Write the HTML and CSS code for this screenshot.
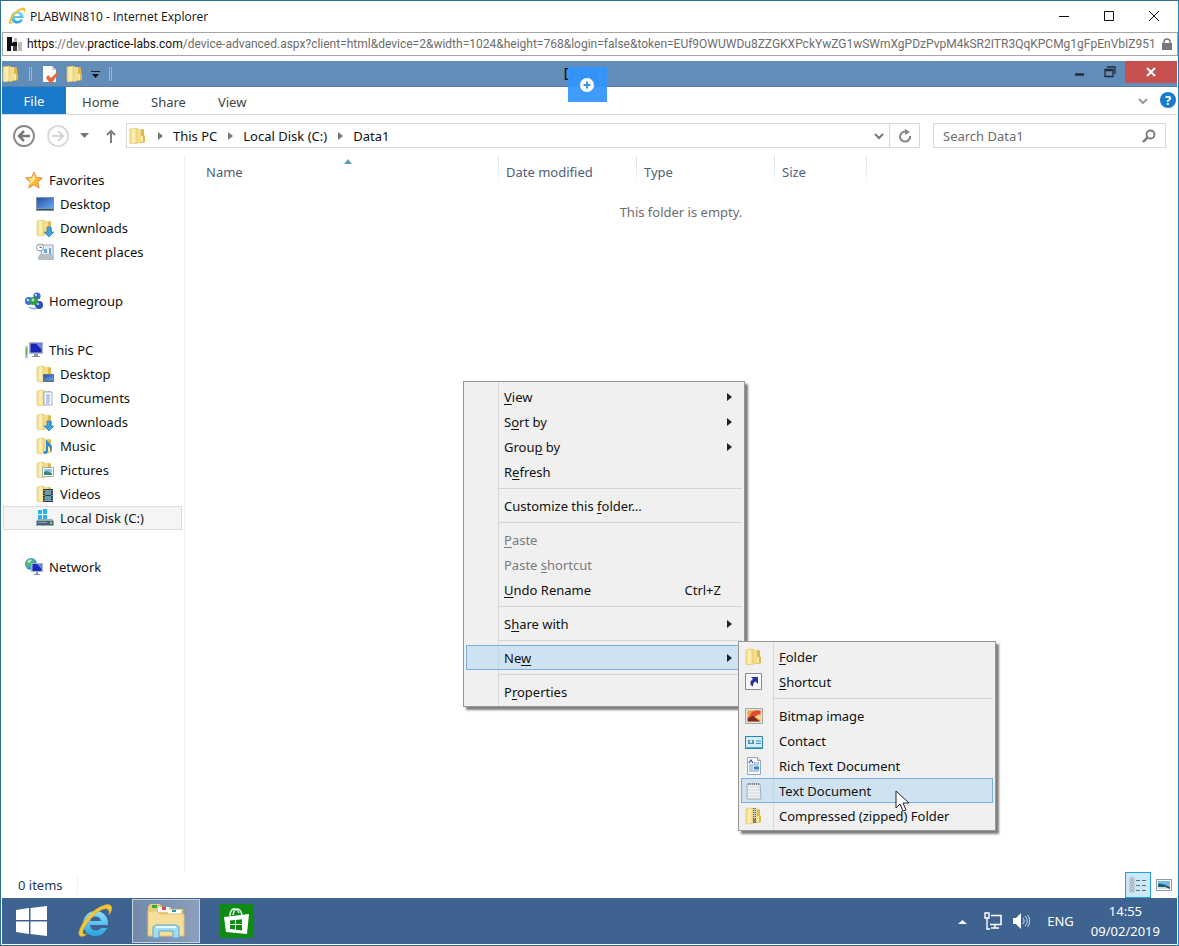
FILE: index.html
```
<!DOCTYPE html>
<html lang="en">
<head>
  <meta charset="UTF-8" />
  <meta name="viewport" content="width=device-width, initial-scale=1" />
  <title>PLABWIN810 - Internet Explorer</title>
  <link rel="stylesheet" href="styles.css">
</head>
<body>
  <!-- Shared icons -->
  <svg class="sprite" aria-hidden="true">
    <defs>
      <linearGradient id="gold" x1="0" x2="1"><stop offset="0" stop-color="#f3dc86" /><stop offset=".5" stop-color="#fdf3bd" /><stop offset="1" stop-color="#e3bf55" /></linearGradient>
      <linearGradient id="screen" x1="0" y1="0" x2="1" y2="1"><stop offset="0" stop-color="#2450a8" /><stop offset="1" stop-color="#6aa5ee" /></linearGradient>
      <linearGradient id="ieblue" x1="0" y1="0" x2="0" y2="1"><stop offset="0" stop-color="#8be0fb" /><stop offset="1" stop-color="#2aa3e0" /></linearGradient>
    </defs>
    <symbol id="folder" viewBox="0 0 18 18">
      <path d="M1 2l6-1 2 1v14l-7 1-1-1z" fill="url(#gold)" stroke="#dfbf5e" stroke-width=".6" />
      <path d="M9 3l5-1 1 1v5l1 1v6l-3 1H9z" fill="#dfb850" />
      <path d="M8 2h4v13l-4 2z" fill="#f4dd86" />
      <path d="M12 9h2v6h-2z" fill="#f9eaa9" />
    </symbol>
    <symbol id="ie" viewBox="0 0 36 36">
      <path d="M31 22H13c.3 3.500 2.500 5.500 6 5.500 2.500 0 4-1 5-2.500h6c-2 5-6 8-11.500 8C11 33 6 28 6 21S11 8 18.500 8 32 14 31 22zM13 18h11c-.4-3-2.400-4.500-5.500-4.500S13.500 15 13 18z" fill="url(#ieblue)" />
      <path d="M10 31c-4 4-9 3-8-2C4 20 16 5 28 2c7-2 9 3 4 10 1-5-1-7-5-6C19 8 8 21 6 28c-.6 2.500.6 4 4 3z" fill="#f4c63a" stroke="#d9a520" stroke-width=".5" />
    </symbol>
    <symbol id="star" viewBox="0 0 18 18">
      <path d="M9 1l2.300 5.400 6 .6-4.500 4 1.400 6L9 13.800 3.800 17l1.400-6L.7 7l6-.6z" fill="#fbb936" stroke="#e2762a" stroke-width=".8" />
      <path d="M9 3l1.600 4.500L7 12l-3 2 1.400-4L3 7.800l4-.6z" fill="#ffe58a" />
    </symbol>
    <symbol id="desktop" viewBox="0 0 18 18">
      <path d="M0 2h18v14H0z" fill="#8496ae" /><path d="M1 3h16v10H1z" fill="url(#screen)" /><path d="M1 14h16v1H1z" fill="#31486c" />
    </symbol>
    <symbol id="downloads" viewBox="0 0 18 18">
      <use href="#folder" />
      <path d="M11 8h4v5h3l-5 5-5-5h3z" fill="#3fa2de" stroke="#1d6fae" stroke-width=".6" />
    </symbol>
    <symbol id="recent" viewBox="0 0 18 18">
      <path d="M4 2h13v12H6z" fill="#e6eef5" stroke="#97a5b2" />
      <path d="M2 14l2-3h12l2 3v3H2z" fill="#b7bec4" />
      <path d="M8 6h3v4H8zM13 5h2v6h-2z" fill="#6aa6dc" />
      <circle cx="4" cy="4.500" r="3.500" fill="#fff" stroke="#8695a4" /><path d="M4 2.500v2h2" fill="none" stroke="#51606f" stroke-width=".8" />
    </symbol>
    <symbol id="homegroup" viewBox="0 0 18 18">
      <circle cx="12" cy="4" r="3.600" fill="#3a66cf" /><circle cx="4" cy="9" r="4" fill="#3b73d6" /><circle cx="14" cy="13" r="4" fill="#2c4fb8" />
      <circle cx="9" cy="9" r="4" fill="#2f9e44" /><circle cx="8" cy="8" r="1.500" fill="#a6e3a9" /><circle cx="3" cy="8" r="1.300" fill="#bfe0ff" /><circle cx="11" cy="3" r="1.200" fill="#bcd7ff" /><circle cx="13" cy="12" r="1.200" fill="#a9c3f6" />
      <path d="M4 15c3 2 6 2 8 1" fill="none" stroke="#7fa8e4" stroke-width="1.500" />
    </symbol>
    <symbol id="pc" viewBox="0 0 18 18">
      <path d="M4 1h14v12H4z" fill="#aab9c9" /><path d="M5.500 2.500h11v9h-11z" fill="#1a25b4" /><path d="M11 2.500h5.500v6z" fill="#6c8cf0" />
      <path d="M9 13h4v2h2v1H7v-1h2z" fill="#8998a8" /><path d="M0 5h3v12H0z" fill="#bcc7bd" /><path d="M1 7h1v7H1z" fill="#63a356" />
    </symbol>
    <symbol id="f-desktop" viewBox="0 0 18 18">
      <use href="#folder" /><path d="M7 9h11v8H7z" fill="#5f7795" /><path d="M8 10h9v5H8z" fill="url(#screen)" />
    </symbol>
    <symbol id="f-documents" viewBox="0 0 18 18">
      <use href="#folder" /><path d="M8 3h8v13H8z" fill="#f7fbff" stroke="#8b9cae" stroke-width=".8" />
      <path d="M10 6h4M10 8h4M10 10h4M10 12h4M10 14h3" stroke="#6a92bf" stroke-width=".9" />
    </symbol>
    <symbol id="f-music" viewBox="0 0 18 18">
      <use href="#folder" /><path d="M11 3c1 3 5 4 5 8 0 2-1 3-2 4 1-3 0-5-2-6v5c0 2-1 3-3 3s-2-3 0-3h1V3z" fill="#2f8dcc" />
    </symbol>
    <symbol id="f-pictures" viewBox="0 0 18 18">
      <use href="#folder" /><path d="M6.500 6.500h11v9h-11z" fill="#fff" stroke="#8799a9" stroke-width=".8" /><path d="M8 8h8v3H8z" fill="#8dccf0" /><path d="M8 11l3-1 5 2v2H8z" fill="#35886f" />
    </symbol>
    <symbol id="f-videos" viewBox="0 0 18 18">
      <use href="#folder" /><path d="M7 4h10v13H7z" fill="#2c3c46" /><path d="M9 5h6v5H9zM9 11h6v5H9z" fill="#6b9ca8" /><path d="M8 5v12M16 5v12" stroke="#d8dde0" stroke-width="1" stroke-dasharray="1 1.500" />
    </symbol>
    <symbol id="disk" viewBox="0 0 18 18">
      <path d="M2 1h4v4H2zM7 0h4v5H7zM2 6h4v4H2zM7 6h4v4H7z" fill="#1fb6e8" />
      <path d="M2 10h14l2 2v5H0v-5z" fill="#9aabb5" /><path d="M1 12h16v4H1z" fill="#4c6472" /><path d="M2 13h9v1H2z" fill="#83a4af" /><path d="M14 13h2v2h-2z" fill="#6be36e" />
    </symbol>
    <symbol id="network" viewBox="0 0 18 18">
      <circle cx="6" cy="6" r="6" fill="#3e9bd0" /><path d="M2 3c3-3 6-2 7 0l-3 3-3 4c-2-2-3-4-1-7z" fill="#55ba68" /><path d="M2 4c2-3 4-3 5-2L4 5z" fill="#c5efd2" />
      <path d="M6 5h12v9H6z" fill="#a8b7c8" /><path d="M7.500 6h9v7h-9z" fill="#1b2bbb" /><path d="M12 6h4.500v5z" fill="#6b8cec" /><path d="M11 14h2v2h2v1H9v-1h2z" fill="#8090a8" />
    </symbol>
    <symbol id="shortcut" viewBox="0 0 18 18">
      <path d="M.5.500h16v16H.5z" fill="#f7f8fc" stroke="#848b99" /><path d="M6 4h7v7l-2.500-2.500C8.500 9.500 8 11 8 13.500 4 12 5 8 8 6z" fill="#28349a" />
    </symbol>
    <symbol id="bitmap" viewBox="0 0 18 18">
      <path d="M.5 1.500h17v15H.5z" fill="#e3e3e3" stroke="#a5a5a5" /><path d="M2.500 3.500h13v11h-13z" fill="#f2a33a" />
      <path d="M2.500 11c3-1 3-7 8-7.500h5V7c-4 0-5 3-7 6l-6 1.500z" fill="#df4b2c" /><path d="M3 11l5-2 7 5.500H3z" fill="#7b2b21" /><path d="M10 10c2-2 4-2 5.500-1v4z" fill="#fbe091" />
    </symbol>
    <symbol id="contact" viewBox="0 0 18 18">
      <path d="M.5 4.500h17v12H.5z" fill="#d4edfa" stroke="#2f83ab" /><path d="M1 15h16v1H1z" fill="#4eb0d2" />
      <path d="M3 8h6v4H3z" fill="#4f96bd" /><circle cx="6" cy="9.500" r="1.200" fill="#fff" /><path d="M11 9h5M11 11.500h5" stroke="#3e8db3" />
    </symbol>
    <symbol id="rtf" viewBox="0 0 18 18">
      <path d="M2.500.500h10l3 3v14h-13z" fill="#f8fbff" stroke="#99a6b4" /><path d="M12.500.500v3h3" fill="#dce4ec" stroke="#99a6b4" />
      <path d="M4 6l2-3 2 3" fill="none" stroke="#284db0" stroke-width="1.200" /><path d="M9 6h5M4 8h10M4 10h4M4 12h4M4 14h10" stroke="#7898c4" /><path d="M9 9.500h5v3H9z" fill="#2f86c6" />
    </symbol>
    <symbol id="txt" viewBox="0 0 18 18">
      <path d="M2 2h13l1 15H2z" fill="#f3f3f3" stroke="#a3a9af" /><path d="M3 5h12M3 8h12M3 11h12M3 14h12" stroke="#cdd3d8" /><path d="M3 2h12" stroke="#7d8489" stroke-width="2" stroke-dasharray="1 1" />
    </symbol>
    <symbol id="zip" viewBox="0 0 18 18">
      <use href="#folder" /><path d="M9.500 1v12" stroke="#555c63" stroke-width="3" stroke-dasharray="1 1" /><path d="M9.500 1v12" stroke="#b9bec2" stroke-width="1" /><path d="M8 12h3v4H8z" fill="#767d83" />
    </symbol>
  </svg>

  <header class="browser-bar">
    <svg class="icon" viewBox="0 0 36 36"><use href="#ie" /></svg>
    <h1>PLABWIN810 - Internet Explorer</h1>
    <div class="browser-controls">
      <button aria-label="Minimize"><svg viewBox="0 0 12 12"><path d="M1 6.500h10" /></svg></button>
      <button aria-label="Maximize"><svg viewBox="0 0 12 12"><path d="M1.500 1.500h9v9h-9z" /></svg></button>
      <button aria-label="Close"><svg viewBox="0 0 12 12"><path d="M1 1l10 10M11 1L1 11" /></svg></button>
    </div>
  </header>
  <div class="url-bar">
    <svg class="site-icon" viewBox="0 0 15 16"><path d="M0 1h5v6l4-3h1v11H6v-5H4v5H0z" fill="#111" /><path d="M7 2h3v4H7zM11 6h4v9h-4z" fill="#bbb" /><path d="M6 10h4v5H6z" fill="#444" /></svg>
    <p class="url"><b>https</b>://dev.<b>practice-labs.com</b>/device-advanced.aspx?client=html&amp;device=2&amp;width=1024&amp;height=768&amp;login=false&amp;token=EUf9OWUWDu8ZZGKXPckYwZG1wSWmXgPDzPvpM4kSR2ITR3QqKPCMg1gFpEnVbIZ951</p>
    <svg class="lock" viewBox="0 0 10 12"><path d="M2 6V4a3 3 0 0 1 6 0v2" fill="none" stroke="#777" stroke-width="1.500" /><path d="M0 5h10v7H0z" fill="#777" /></svg>
  </div>

  <div class="desktop">
    <div class="window-bar">
      <div class="quick-access">
        <svg class="icon" viewBox="0 0 18 18"><use href="#folder" /></svg>
        <span class="divider"></span>
        <button class="plain" aria-label="Properties"><svg class="icon" viewBox="0 0 18 18"><path d="M2 1h9l4 4v12H2z" fill="#fcfcfe" /><path d="M11 1v4h4" fill="#cfd6de" /><path d="M7 10l3 3 6-6 1 2-6 9H9l-4-5z" fill="#e5683c" /></svg></button>
        <button class="plain" aria-label="New folder"><svg class="icon" viewBox="0 0 18 18"><use href="#folder" /></svg></button>
        <button class="plain" aria-label="Customize toolbar"><svg class="tiny" viewBox="0 0 9 9"><path d="M0 1h9v1H0z" fill="#222" /><path d="M1 4h7L4.500 8z" fill="#111" /></svg></button>
        <span class="divider"></span>
      </div>
      <h2>Data1</h2>
      <div class="window-controls">
        <button aria-label="Minimize"><svg viewBox="0 0 12 12"><path d="M1 8.500h9" stroke="#222b36" stroke-width="2.500" /></svg></button>
        <button aria-label="Restore"><svg viewBox="0 0 12 12"><path d="M1 3.500h8v7H1zM1 4.500h8M3 1h8v7" fill="none" stroke="#222b36" stroke-width="1.300" /></svg></button>
        <button class="close" aria-label="Close"><svg viewBox="0 0 12 12"><path d="M2 2l8 8M10 2l-8 8" stroke="#fff" stroke-width="2" /></svg></button>
      </div>
      <button class="lab-toggle" aria-label="Lab options"><svg viewBox="0 0 14 14"><circle cx="7" cy="7" r="7" fill="#fff" /><path d="M7 3.500v7M3.500 7h7" stroke="#3b92f0" stroke-width="2" /></svg></button>
    </div>

    <nav class="ribbon">
      <button class="file">File</button>
      <button>Home</button>
      <button>Share</button>
      <button>View</button>
      <button class="expand" aria-label="Expand the ribbon"><svg viewBox="0 0 10 8"><path d="M1 2l4 4 4-4" fill="none" stroke="#999" stroke-width="2" /></svg></button>
      <button class="help" aria-label="Help">?</button>
    </nav>

    <div class="nav-row">
      <div class="history">
        <button class="plain" aria-label="Back"><svg class="round" viewBox="0 0 24 24"><circle cx="12" cy="12" r="10" fill="none" stroke="#858585" stroke-width="1.800" /><path d="M18 12H8M12 7l-5 5 5 5" fill="none" stroke="#777" stroke-width="2.500" /></svg></button>
        <button class="plain" aria-label="Forward"><svg class="round" viewBox="0 0 24 24"><circle cx="12" cy="12" r="10" fill="none" stroke="#d4d4d4" stroke-width="1.600" /><path d="M6 12h10M12 7l5 5-5 5" fill="none" stroke="#d4d4d4" stroke-width="2" /></svg></button>
        <button class="plain" aria-label="Recent locations"><svg class="tiny" viewBox="0 0 9 9"><path d="M0 2h9L4.500 7z" fill="#777" /></svg></button>
        <button class="plain" aria-label="Up"><svg class="up" viewBox="0 0 12 16"><path d="M6 15V3M2 7l4-4 4 4" fill="none" stroke="#808080" stroke-width="2" /></svg></button>
      </div>
      <div class="path">
        <svg class="icon" viewBox="0 0 18 18"><use href="#folder" /></svg>
        <i class="arrow"></i><a href="#pc-link">This PC</a>
        <i class="arrow"></i><a href="#disk-link">Local Disk (C:)</a>
        <i class="arrow"></i><a href="#files">Data1</a>
        <button class="drop" aria-label="Previous locations"><svg viewBox="0 0 10 8"><path d="M1 2l4 4 4-4" fill="none" stroke="#777" stroke-width="2" /></svg></button>
        <button class="refresh" aria-label="Refresh"><svg viewBox="0 0 14 14"><path d="M9 3a5 5 0 1 0 3 4" fill="none" stroke="#858585" stroke-width="2" /><path d="M7 0v6l5-3z" fill="#858585" /></svg></button>
      </div>
      <form class="search">
        <input type="text" aria-label="Search Data1" placeholder="Search Data1" />
        <svg viewBox="0 0 14 14"><circle cx="8.500" cy="5.500" r="4" fill="none" stroke="#777" stroke-width="1.800" /><path d="M5.500 8.500L1 13" stroke="#777" stroke-width="2.400" /></svg>
      </form>
    </div>

    <main>
      <aside>
        <ul>
          <li><a href="#"><svg><use href="#star" /></svg>Favorites</a></li>
          <li class="sub"><a href="#"><svg><use href="#desktop" /></svg>Desktop</a></li>
          <li class="sub"><a href="#"><svg><use href="#downloads" /></svg>Downloads</a></li>
          <li class="sub"><a href="#"><svg><use href="#recent" /></svg>Recent places</a></li>
        </ul>
        <ul>
          <li><a href="#"><svg><use href="#homegroup" /></svg>Homegroup</a></li>
        </ul>
        <ul>
          <li><a href="#" id="pc-link"><svg><use href="#pc" /></svg>This PC</a></li>
          <li class="sub"><a href="#"><svg><use href="#f-desktop" /></svg>Desktop</a></li>
          <li class="sub"><a href="#"><svg><use href="#f-documents" /></svg>Documents</a></li>
          <li class="sub"><a href="#"><svg><use href="#downloads" /></svg>Downloads</a></li>
          <li class="sub"><a href="#"><svg><use href="#f-music" /></svg>Music</a></li>
          <li class="sub"><a href="#"><svg><use href="#f-pictures" /></svg>Pictures</a></li>
          <li class="sub"><a href="#"><svg><use href="#f-videos" /></svg>Videos</a></li>
          <li class="sub selected"><a href="#" id="disk-link"><svg><use href="#disk" /></svg>Local Disk (C:)</a></li>
        </ul>
        <ul>
          <li><a href="#"><svg><use href="#network" /></svg>Network</a></li>
        </ul>
      </aside>

      <section class="files" id="files">
        <table>
          <thead>
            <tr>
              <th class="col-name">Name <i class="sorted"></i></th>
              <th class="col-date">Date modified</th>
              <th class="col-type">Type</th>
              <th class="col-size">Size</th>
              <th></th>
            </tr>
          </thead>
          <tbody>
            <tr><td colspan="5">This folder is empty.</td></tr>
          </tbody>
        </table>

        <div class="menu context-menu" role="menu">
          <button role="menuitem"><span><u>V</u>iew</span><i class="more"></i></button>
          <button role="menuitem"><span>S<u>o</u>rt by</span><i class="more"></i></button>
          <button role="menuitem"><span>Grou<u>p</u> by</span><i class="more"></i></button>
          <button role="menuitem"><span>R<u>e</u>fresh</span></button>
          <hr />
          <button role="menuitem"><span>Customize this <u>f</u>older...</span></button>
          <hr />
          <button role="menuitem" disabled><span><u>P</u>aste</span></button>
          <button role="menuitem" disabled><span>Paste <u>s</u>hortcut</span></button>
          <button role="menuitem"><span><u>U</u>ndo Rename</span><kbd>Ctrl+Z</kbd></button>
          <hr />
          <button role="menuitem"><span>S<u>h</u>are with</span><i class="more"></i></button>
          <hr />
          <button role="menuitem" class="active"><span>Ne<u>w</u></span><i class="more"></i></button>
          <hr />
          <button role="menuitem"><span>P<u>r</u>operties</span></button>

          <div class="menu submenu" role="menu">
            <button role="menuitem"><svg><use href="#folder" /></svg><span><u>F</u>older</span></button>
            <button role="menuitem"><svg><use href="#shortcut" /></svg><span><u>S</u>hortcut</span></button>
            <hr />
            <button role="menuitem"><svg><use href="#bitmap" /></svg><span>Bitmap image</span></button>
            <button role="menuitem"><svg><use href="#contact" /></svg><span>Contact</span></button>
            <button role="menuitem"><svg><use href="#rtf" /></svg><span>Rich Text Document</span></button>
            <button role="menuitem" class="active"><svg><use href="#txt" /></svg><span>Text Document</span></button>
            <button role="menuitem"><svg><use href="#zip" /></svg><span>Compressed (zipped) Folder</span></button>
            <svg class="cursor" viewBox="0 0 14 22"><path d="M1 1v17l4-4 3 7 3-1-3-7h6z" fill="#fff" stroke="#222" /></svg>
          </div>
        </div>
      </section>
    </main>

    <div class="status-bar">
      <span class="count">0 items</span>
      <button class="current" aria-label="Details view"><svg viewBox="0 0 18 16"><path d="M1 1h4v4H1zM1 6h4v4H1zM1 11h4v4H1z" fill="#fff" stroke="#8a97a3" stroke-width=".8" /><path d="M2 3h2M2 8h2M2 13h2" stroke="#456" /><path d="M7 3.500h4M13 3.500h4M7 8.500h4M13 8.500h4M7 13.500h4M13 13.500h4" stroke="#5d6f7e" /></svg></button>
      <button aria-label="Large icons view"><svg viewBox="0 0 18 16"><path d="M1.500 2.500h15v11h-15z" fill="#fff" stroke="#8e9aa5" /><path d="M3 4h12v8H3z" fill="#75bbe5" /><path d="M3 7c4-1 7 1 12 3v2H3z" fill="#205f6e" /><path d="M3 10h7l5 2H3z" fill="#cbe5e5" /></svg></button>
    </div>
  </div>

  <footer class="taskbar">
    <button class="start" aria-label="Start"><svg viewBox="0 0 31 30"><path d="M0 4l13-2v12H0zM14.500 2L31 0v14H14.500zM0 15.500h13V28L0 26zM14.500 15.500H31V30l-16.500-2z" fill="#fff" /></svg></button>
    <button class="app" aria-label="Internet Explorer"><svg class="big" viewBox="0 0 36 36"><use href="#ie" /></svg></button>
    <button class="app open" aria-label="File Explorer">
      <svg class="big" viewBox="0 0 38 36">
        <path d="M1 4l2-3h10l2 3h8l2 2h11v27H1z" fill="#e8cc7a" />
        <path d="M5 2h5v3H5z" fill="#2eae42" /><path d="M11 4h11v5H11z" fill="#fbfbfb" /><path d="M15 4h4v3h-4z" fill="#db4a36" /><path d="M21 7h13v4H21z" fill="#fff" /><path d="M25 7h4v2h-4z" fill="#2b91da" />
        <path d="M1 8h9l3 3h24v22H1z" fill="#f5df9a" stroke="#dfc270" />
        <path d="M6 35V24l3-2h20l3 2v11h-6v-7H12v7z" fill="#a5daf3" stroke="#5ba8d4" /><path d="M9 24h20" stroke="#e9f8ff" stroke-width="2" />
      </svg>
    </button>
    <button class="app store" aria-label="Store"><svg viewBox="0 0 34 34"><path d="M0 0h34v34H0z" fill="#0f8a13" /><path d="M10 12c0-8 7-10 9-3M13 11c1-7 7-9 9 0" fill="none" stroke="#d8f0d8" stroke-width="1.600" /><path d="M4 13l25-3-2 20-21-2z" fill="#fff" /><path d="M10 16.500l5-.5v4h-5zM16 15.900l6-.7V20h-6zM10 21h5v4.500l-5-.5zM16 21h6v5.500l-6-.8z" fill="#0f8a13" /></svg></button>
    <div class="tray">
      <button class="plain" aria-label="Show hidden icons"><svg class="tiny" viewBox="0 0 9 9"><path d="M0 7h9L4.500 3z" fill="#fff" /></svg></button>
      <div class="tray-icons">
        <svg viewBox="0 0 18 18"><path d="M7 3.500h10v9H6M11 13v3M7 16h8" fill="none" stroke="#fff" stroke-width="1.500" /><path d="M1 1h4v5H1zM3 6v11h3" fill="none" stroke="#fff" stroke-width="1.400" /></svg>
        <svg viewBox="0 0 18 18"><path d="M1 6h3l5-5v16l-5-5H1z" fill="#fff" /><path d="M11 6c1.500 2 1.500 4 0 6M13 4c3 3 3 7 0 10M15.500 3c3 4 3 8 0 12" fill="none" stroke="#dce4ee" /></svg>
      </div>
      <span>ENG</span>
      <time datetime="2019-02-09T14:55">14:55<br />09/02/2019</time>
    </div>
  </footer>
</body>
</html>
```
FILE: styles.css
```
* {
  box-sizing: border-box;
}
body {
  margin: 0;
  min-height: 100vh;
  display: flex;
  flex-direction: column;
  border: 1px solid #2f7196;
  border-right-color: #1883c4;
  background: #fff;
  color: #111;
  font-family: "Noto Sans", "Open Sans", sans-serif;
  font-size: 13px;
}
button {
  display: flex;
  align-items: center;
  justify-content: center;
  padding: 0;
  border: none;
  background: none;
  color: inherit;
  font: inherit;
}
a {
  color: inherit;
  text-decoration: none;
}
h1, h2, p, ul {
  margin: 0;
  padding: 0;
  font-weight: normal;
}
svg {
  display: block;
  flex: none;
}
.sprite {
  position: absolute;
  width: 0;
  height: 0;
}
.icon {
  width: 18px;
  height: 18px;
}
.tiny {
  width: 9px;
  height: 9px;
}

/* Browser frame */
.browser-bar {
  display: flex;
  align-items: center;
  height: 30px;
  margin-bottom: 1px;
  padding: 0 2px 0 7px;
  gap: 4px;
}
.browser-bar h1 {
  flex: 1;
  font-family: "Open Sans", sans-serif;
  font-size: 12px;
}
.browser-controls {
  display: flex;
}
.browser-controls button {
  width: 45px;
  height: 28px;
}
.browser-controls svg {
  width: 12px;
  height: 12px;
  fill: none;
  stroke: #111;
}
.url-bar {
  display: flex;
  align-items: center;
  gap: 5px;
  height: 24px;
  margin-left: 1px;
  padding: 0 5px 0 4px;
  border: 1px solid #a5a5a5;
}
.site-icon {
  width: 15px;
  height: 16px;
}
.url {
  flex: 1;
  min-width: 0;
  overflow: hidden;
  white-space: nowrap;
  color: #6d6d6d;
  font-family: Roboto, sans-serif;
  font-size: 12px;
}
.url b {
  color: #111;
  font-weight: normal;
}
.lock {
  width: 10px;
  height: 12px;
}

/* Explorer window */
.desktop {
  flex: 1;
  display: flex;
  flex-direction: column;
  margin-top: 5px;
  padding: 0 1px;
}
.window-bar {
  position: relative;
  display: grid;
  grid-template-columns: 1fr auto 1fr;
  height: 26px;
  background: #628db8;
  border-bottom: 1px solid #5580ab;
}
.window-bar h2 {
  padding-right: 8px;
  font-size: 16px;
  line-height: 26px;
}
.quick-access {
  display: flex;
  align-items: center;
  gap: 7px;
}
.divider {
  width: 3px;
  height: 14px;
  margin: 0 2px;
  border: 1px solid #9ab5d0;
  border-width: 0 1px;
}
.window-controls {
  display: flex;
  justify-content: flex-end;
}
.window-controls button {
  width: 30px;
  height: 22px;
}
.window-controls svg {
  width: 12px;
  height: 12px;
}
.window-controls .close {
  width: 52px;
  background: #c75050;
}
.lab-toggle {
  position: absolute;
  top: 6px;
  left: 50%;
  width: 39px;
  height: 35px;
  margin-left: -22px;
  background: rgba(51, 150, 255, 0.94);
}
.lab-toggle svg {
  width: 14px;
  height: 14px;
}
.ribbon {
  display: flex;
  height: 28px;
  border-bottom: 1px solid #dadbdc;
  color: #444;
}
.ribbon button {
  padding: 3px 16px 0;
}
.ribbon .file {
  width: 64px;
  padding: 0;
  background: #1979ca;
  color: #fff;
}
.ribbon .expand {
  margin-left: auto;
  padding: 0 12px;
}
.expand svg, .drop svg {
  width: 10px;
  height: 8px;
}
.ribbon .help {
  width: 16px;
  height: 16px;
  margin-top: 5px;
  margin-right: 1px;
  padding: 0;
  border-radius: 50%;
  background: #1979ca;
  color: #fff;
  font-weight: bold;
}
.nav-row {
  display: flex;
  align-items: center;
  gap: 13px;
  height: 41px;
  padding: 0 11px 0 10px;
}
.history {
  display: flex;
  align-items: center;
  gap: 10px;
}
.round {
  width: 24px;
  height: 24px;
}
.up {
  width: 12px;
  height: 16px;
  margin-left: 6px;
}
.path, .search {
  display: flex;
  align-items: center;
  height: 25px;
  border: 1px solid #d9d9d9;
}
.path {
  flex: 1;
  margin-left: -4px;
  padding-left: 2px;
}
.arrow {
  margin: 0 10px 0 11px;
  border: 4px solid transparent;
  border-left: 5px solid #777;
  border-right: none;
}
.path .drop {
  width: 20px;
  margin-left: auto;
}
.path .refresh {
  width: 30px;
  height: 100%;
  border-left: 1px solid #d9d9d9;
}
.refresh svg, .search svg {
  width: 14px;
  height: 14px;
}
.search {
  width: 233px;
  padding: 0 9px;
}
.search input {
  flex: 1;
  min-width: 0;
  padding: 0;
  border: none;
  font: inherit;
}
.search input::placeholder {
  color: #6d6d6d;
}

/* Folder tree and file list */
main {
  flex: 1;
  display: flex;
}
aside {
  width: 183px;
  padding: 12px 2px 0 1px;
  border-right: 1px solid #f0f0f0;
}
aside ul {
  margin-bottom: 25px;
  list-style: none;
}
aside a {
  display: flex;
  align-items: center;
  gap: 6px;
  height: 24px;
  padding-left: 22px;
}
aside .sub a {
  padding-left: 33px;
}
aside .selected {
  background: #f5f5f5;
  outline: 1px solid #dcdcdc;
  outline-offset: -1px;
}
aside svg, .menu button svg {
  width: 18px;
  height: 18px;
}
.files {
  flex: 1;
  position: relative;
}
table {
  width: 100%;
  table-layout: fixed;
  border-spacing: 0;
}
th {
  height: 32px;
  padding: 0 7px;
  background: linear-gradient(#d5e4ee, #f2f7fa) right top / 1px 26px no-repeat;
  color: #4c607a;
  font-weight: normal;
  text-align: left;
}
th:last-child {
  background: none;
}
.col-name {
  width: 314px;
  padding-left: 21px;
}
.col-date, .col-type {
  width: 138px;
}
.col-size {
  width: 92px;
}
.sorted {
  position: absolute;
  top: 3px;
  left: 159px;
  border: 4px solid transparent;
  border-top: none;
  border-bottom: 5px solid #5f9dbd;
}
td {
  height: 48px;
  padding: 0;
  color: #6d6d6d;
  text-align: center;
}

/* Context menus */
.menu {
  position: absolute;
  padding: 2px;
  border: 1px solid #979797;
  background: linear-gradient(90deg, transparent 34px, #d9d9d9 34px, #d9d9d9 35px, transparent 35px) #f0f0f0;
  box-shadow: 3px 3px 2px rgba(0, 0, 0, 0.5);
}
.context-menu {
  top: 225px;
  left: 278px;
  width: 282px;
}
.submenu {
  top: 259px;
  left: 274px;
  width: 258px;
}
.menu button {
  position: relative;
  width: 100%;
  height: 25px;
  padding: 0 9px 0 37px;
  border: 1px solid transparent;
  justify-content: flex-start;
}
.menu button[disabled] {
  color: #7b7b7b;
}
.menu .active {
  border-color: #78aee5;
  background: rgba(181, 215, 243, 0.55);
}
.menu button svg {
  margin-left: -34px;
  margin-right: 16px;
}
.menu u {
  text-underline-offset: 2px;
}
.menu hr {
  height: 1px;
  margin: 4px 0 4px 32px;
  border: none;
  background: #d4d4d4;
}
.more {
  margin-left: auto;
  border: 4px solid transparent;
  border-left: 5px solid #222;
  border-right: none;
}
kbd {
  margin-left: auto;
  padding-right: 11px;
  font: inherit;
}
.cursor {
  position: absolute;
  top: 148px;
  left: 156px;
  width: 14px;
  height: 22px;
}

.status-bar {
  display: flex;
  align-items: center;
  height: 27px;
}
.count {
  margin-right: auto;
  padding: 0 14px 0 16px;
  border-right: 1px solid #f0f0f0;
  color: #1e395b;
}
.status-bar button {
  width: 26px;
  height: 26px;
}
.status-bar .current {
  border: 1px solid #26a0da;
  background: #cbe8f6;
}
.status-bar svg {
  width: 18px;
  height: 16px;
}

/* Taskbar */
.taskbar {
  display: flex;
  align-items: center;
  height: 46px;
  margin: 0 1px 1px;
  background: #3e6390;
  color: #fff;
}
.start {
  width: 59px;
}
.start svg {
  width: 31px;
  height: 30px;
}
.app {
  width: 68px;
  height: 44px;
  margin-right: 3px;
}
.big {
  width: 38px;
  height: 36px;
}
.open {
  border: 1px solid #c8d2df;
  background: linear-gradient(90deg, #7189ab, #8c9fba);
}
.store svg {
  width: 34px;
  height: 34px;
}
.tray {
  display: flex;
  align-items: center;
  gap: 17px;
  margin-left: auto;
  padding-right: 17px;
}
.tray-icons {
  display: flex;
  gap: 10px;
}
.tray-icons svg {
  width: 18px;
  height: 18px;
}
.tray time {
  line-height: 20px;
  text-align: center;
}
```
